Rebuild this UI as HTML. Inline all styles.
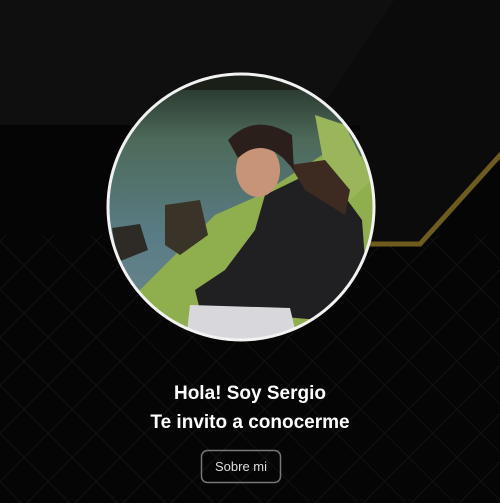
<!DOCTYPE html>
<html><head><style>
html,body{margin:0;padding:0;background:#050505;width:500px;height:503px;overflow:hidden}
.t{position:absolute;left:0;width:500px;text-align:center;color:#fff;font:bold 19px "Liberation Sans",sans-serif}
</style></head><body>
<svg width="500" height="503" style="position:absolute;left:0;top:0">
<defs>
<pattern id="g" width="34" height="34" patternUnits="userSpaceOnUse" patternTransform="rotate(45)">
<path d="M0 0H34M0 0V34" stroke="#161616" stroke-width="1.5" fill="none"/>
</pattern>
<clipPath id="c"><circle cx="241" cy="207" r="132"/></clipPath>
<linearGradient id="w" x1="0" y1="0" x2="0" y2="1"><stop offset="0" stop-color="#1f2a22"/><stop offset=".25" stop-color="#4d6a5a"/><stop offset=".6" stop-color="#5a7c86"/><stop offset="1" stop-color="#6f8a8c"/></linearGradient>
</defs>
<rect width="500" height="503" fill="#050505"/>
<rect y="235" width="500" height="268" fill="url(#g)"/>
<polygon points="0,0 395,0 310,125 0,125" fill="#0f0f0f"/>
<polygon points="395,0 500,0 500,155 420,243 360,243 360,125 310,125" fill="#0b0b0b"/>
<polyline points="502,153 420,244 370,244" fill="none" stroke="#6e5b1e" stroke-width="5"/>
<g clip-path="url(#c)">
<rect x="100" y="70" width="290" height="280" fill="url(#w)"/>
<rect x="100" y="70" width="290" height="20" fill="#1a2018"/>
<path d="M130 300 L175 255 L215 215 L260 195 L330 150 L380 160 L380 350 L100 350Z" fill="#8fae4e"/>
<path d="M315 115 L345 125 L372 180 L350 200 L325 170Z" fill="#9ab55a"/>
<path d="M165 205 L200 200 L208 235 L180 255 L165 245Z" fill="#3a3428"/>
<path d="M112 228 L140 224 L148 250 L118 262Z" fill="#2e2a26"/>
<path d="M265 195 L300 178 L340 190 L362 220 L368 300 L320 320 L200 310 L195 290 L225 270 L255 230Z" fill="#202023"/>
<path d="M290 165 L325 160 L350 190 L345 215 L305 190Z" fill="#3d2a20"/>
<ellipse cx="258" cy="170" rx="22" ry="27" fill="#c89478"/>
<path d="M228 140 Q255 112 292 135 L294 170 L283 158 Q260 138 238 158Z" fill="#2a1f1a"/>
<path d="M190 305 L290 308 L300 350 L185 350Z" fill="#d8d8dc"/>
</g>
<circle cx="241" cy="207" r="133" fill="none" stroke="#f2f2f2" stroke-width="3"/>
<rect x="201.5" y="450.5" width="79" height="32" rx="6" fill="none" stroke="#777" stroke-width="1.5"/>
</svg>
<div class="t" style="top:383px">Hola! Soy Sergio</div>
<div class="t" style="top:412px">Te invito a conocerme</div>
<div style="position:absolute;left:201px;top:450px;width:80px;height:33px;text-align:center;color:#ddd;font:13px/33px 'Liberation Sans',sans-serif">Sobre mi</div>
</body></html>
